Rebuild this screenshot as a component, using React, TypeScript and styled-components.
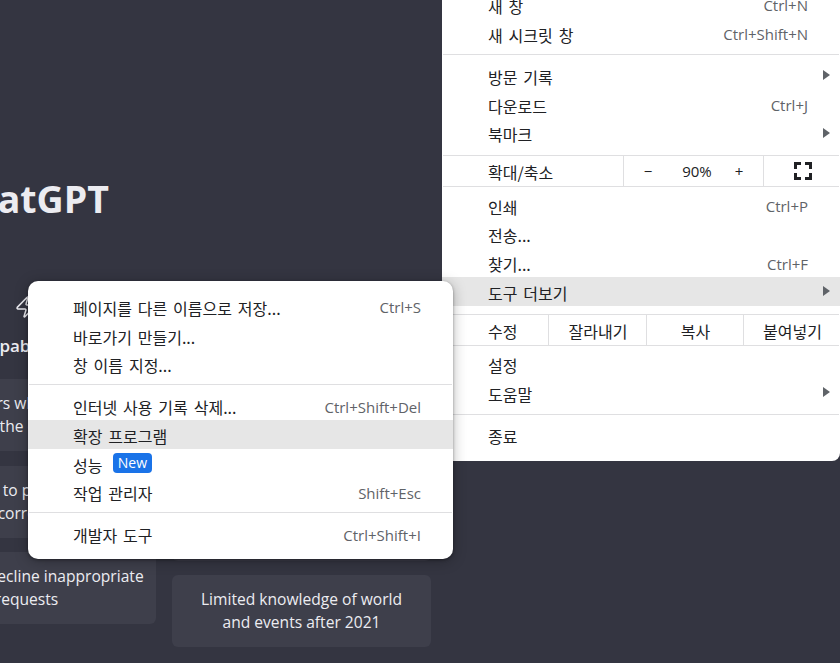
import React from "react";
import styled, { createGlobalStyle } from "styled-components";
import { Zap } from "lucide-react";

const Global = createGlobalStyle`
  html, body { margin: 0; padding: 0; background: #343541; }
`;

const Viewport = styled.div`
  position: relative;
  width: 840px;
  height: 663px;
  overflow: hidden;
  background: #343541;
  font-family: "Open Sans", "Noto Sans", sans-serif;
`;

const Page = styled.div`
  display: flex;
  flex-direction: column;
  margin-left: -103px;
  padding-top: 172px;
`;

const Title = styled.h1`
  width: 259px;
  margin: 0;
  padding-right: 47px;
  box-sizing: border-box;
  text-align: right;
  font-size: 37.5px;
  line-height: 54px;
  font-weight: 700;
  color: #ececf1;
`;

const Columns = styled.div`
  display: flex;
  gap: 16px;
  margin-top: 69px;
`;

const Column = styled.section`
  width: 259px;
  display: flex;
  flex-direction: column;
  align-items: center;
`;

const ColumnHead = styled.div`
  height: 84px;
  display: flex;
  flex-direction: column;
  align-items: center;
  color: #ececf1;
  svg { display: block; }
`;

const ColumnTitle = styled.h2`
  margin: 15px 0 0;
  font-size: 17px;
  line-height: 24px;
  font-weight: 600;
`;

const Cards = styled.div`
  width: 100%;
  display: flex;
  flex-direction: column;
  gap: 14.5px;
`;

const Card = styled.div`
  padding: 13px 0;
  border-radius: 6px;
  background: #3e3f4b;
  color: #ececf1;
  font-size: 15.6px;
  line-height: 23px;
  text-align: center;
`;

const CardLine = styled.span<{ $shift?: number }>`
  display: block;
  white-space: nowrap;
  margin-right: ${(p) => p.$shift ?? 0}px;
`;

const MenuPanel = styled.div`
  position: absolute;
  background: #fff;
  color: #202124;
  font-family: "Noto Sans CJK KR", "Noto Sans", sans-serif;
  font-size: 16px;
  word-spacing: 2.3px;
`;

const MainMenu = styled(MenuPanel)`
  left: 442px;
  right: 0;
  top: -10px;
  padding-bottom: 12px;
  border-radius: 0 0 8px 8px;
`;

const SubMenu = styled(MenuPanel)`
  left: 28px;
  top: 281px;
  width: 425px;
  padding: 11px 0 11px;
  border-radius: 10px;
  box-shadow: 0 1px 3px rgba(0, 0, 0, 0.35), 0 2px 14px rgba(0, 0, 0, 0.28);
`;

const Row = styled.div<{ $active?: boolean; $indent: number; $arrow?: boolean }>`
  height: 28.75px;
  display: flex;
  align-items: center;
  box-sizing: border-box;
  padding: 0 ${(p) => (p.$arrow ? 10 : 32)}px 0 ${(p) => p.$indent}px;
  background: ${(p) => (p.$active ? "#e6e6e6" : "transparent")};
  white-space: nowrap;
`;

const Label = styled.span`
  padding-top: 3px;
`;

const Shortcut = styled.span`
  padding-top: 2px;
  margin-left: auto;
  font-family: "Open Sans", "Noto Sans", sans-serif;
  font-size: 15px;
  color: #5f6368;
  word-spacing: 0;
`;

const Arrow = styled.span`
  margin-left: auto;
  width: 0;
  height: 0;
  border-left: 7px solid #5f6368;
  border-top: 5px solid transparent;
  border-bottom: 5px solid transparent;
`;

const Badge = styled.span`
  margin-left: 10.5px;
  width: 39px;
  height: 20px;
  border-radius: 4px;
  background: #1a73e8;
  color: #fff;
  font-family: "Open Sans", "Noto Sans", sans-serif;
  font-size: 14px;
  line-height: 20px;
  text-align: center;
`;

const Separator = styled.div<{ $before: number; $after: number; $inset: number }>`
  height: 1px;
  margin: ${(p) => p.$before}px ${(p) => p.$inset}px ${(p) => p.$after}px;
  background: #dfdfe1;
`;

const SplitRow = styled.div`
  height: 30px;
  display: flex;
  align-items: stretch;
`;

const SplitLabel = styled.div<{ $width: number }>`
  width: ${(p) => p.$width}px;
  flex: none;
  box-sizing: border-box;
  padding-left: 46px;
  display: flex;
  align-items: center;
`;

const SplitCell = styled.div<{ $width?: number }>`
  flex: ${(p) => (p.$width ? `0 0 ${p.$width}px` : "1 1 0")};
  box-sizing: border-box;
  border-left: 1px solid #dfdfe1;
  display: flex;
  align-items: center;
  justify-content: center;
  padding-left: 1px;
`;

const ZoomControls = styled(SplitCell)`
  display: grid;
  grid-template-columns: 48px 50px 34px;
  justify-items: center;
  justify-content: start;
  padding-left: 0;
  font-family: "Open Sans", "Noto Sans", sans-serif;
  font-size: 15px;
`;

const FullscreenIcon = () => (
  <svg width="18" height="18" viewBox="0 0 18 18" fill="none" stroke="#202124" strokeWidth="3">
    <path d="M1.5 7V1.5H7M11 1.5h5.5V7M16.5 11v5.5H11M7 16.5H1.5V11" />
  </svg>
);

export default function App() {
  return (
    <Viewport>
      <Global />
      <Page>
        <Title>ChatGPT</Title>
        <Columns>
          <Column>
            <ColumnHead>
              <Zap size={24} strokeWidth={1.5} />
              <ColumnTitle>Capabilities</ColumnTitle>
            </ColumnHead>
            <Cards>
              <Card>
                <CardLine $shift={-40}>Remembers what user said earlier</CardLine>
                <CardLine $shift={-68}>the conversation</CardLine>
              </Card>
              <Card>
                <CardLine $shift={-12}>Allows user to provide follow-up</CardLine>
                <CardLine $shift={-24}>corrections</CardLine>
              </Card>
              <Card>
                <CardLine>Trained to decline inappropriate</CardLine>
                <CardLine>requests</CardLine>
              </Card>
            </Cards>
          </Column>
          <Column>
            <ColumnHead>
              <Zap size={24} strokeWidth={1.5} />
              <ColumnTitle>Limitations</ColumnTitle>
            </ColumnHead>
            <Cards>
              <Card>
                <CardLine>May occasionally generate</CardLine>
                <CardLine>incorrect information</CardLine>
              </Card>
              <Card>
                <CardLine>May occasionally produce</CardLine>
                <CardLine>harmful instructions or</CardLine>
                <CardLine>biased content</CardLine>
              </Card>
              <Card>
                <CardLine>Limited knowledge of world</CardLine>
                <CardLine>and events after 2021</CardLine>
              </Card>
            </Cards>
          </Column>
        </Columns>
      </Page>

      <MainMenu>
        <Row $indent={46}><Label>새 창</Label><Shortcut>Ctrl+N</Shortcut></Row>
        <Row $indent={46}><Label>새 시크릿 창</Label><Shortcut>Ctrl+Shift+N</Shortcut></Row>
        <Separator $inset={1} $before={6.5} $after={6} />
        <Row $indent={46} $arrow><Label>방문 기록</Label><Arrow /></Row>
        <Row $indent={46}><Label>다운로드</Label><Shortcut>Ctrl+J</Shortcut></Row>
        <Row $indent={46} $arrow><Label>북마크</Label><Arrow /></Row>
        <Separator $inset={1} $before={7.5} $after={0} />
        <SplitRow>
          <SplitLabel $width={181}><Label>확대/축소</Label></SplitLabel>
          <ZoomControls $width={140}>
            <span>−</span>
            <span>90%</span>
            <span>+</span>
          </ZoomControls>
          <SplitCell><FullscreenIcon /></SplitCell>
        </SplitRow>
        <Separator $inset={1} $before={0} $after={4} />
        <Row $indent={46}><Label>인쇄</Label><Shortcut>Ctrl+P</Shortcut></Row>
        <Row $indent={46}><Label>전송...</Label></Row>
        <Row $indent={46}><Label>찾기...</Label><Shortcut>Ctrl+F</Shortcut></Row>
        <Row $indent={46} $arrow $active><Label>도구 더보기</Label><Arrow /></Row>
        <Separator $inset={1} $before={8} $after={0} />
        <SplitRow>
          <SplitLabel $width={106}><Label>수정</Label></SplitLabel>
          <SplitCell $width={98}><Label>잘라내기</Label></SplitCell>
          <SplitCell $width={97}><Label>복사</Label></SplitCell>
          <SplitCell><Label>붙여넣기</Label></SplitCell>
        </SplitRow>
        <Separator $inset={1} $before={0} $after={3.5} />
        <Row $indent={46}><Label>설정</Label></Row>
        <Row $indent={46} $arrow><Label>도움말</Label><Arrow /></Row>
        <Separator $inset={1} $before={7} $after={5.5} />
        <Row $indent={46}><Label>종료</Label></Row>
      </MainMenu>

      <SubMenu>
        <Row $indent={45}><Label>페이지를 다른 이름으로 저장...</Label><Shortcut>Ctrl+S</Shortcut></Row>
        <Row $indent={45}><Label>바로가기 만들기...</Label></Row>
        <Row $indent={45}><Label>창 이름 지정...</Label></Row>
        <Separator $inset={1} $before={6} $after={6} />
        <Row $indent={45}><Label>인터넷 사용 기록 삭제...</Label><Shortcut>Ctrl+Shift+Del</Shortcut></Row>
        <Row $indent={45} $active><Label>확장 프로그램</Label></Row>
        <Row $indent={45}><Label>성능</Label><Badge>New</Badge></Row>
        <Row $indent={45}><Label>작업 관리자</Label><Shortcut>Shift+Esc</Shortcut></Row>
        <Separator $inset={1} $before={6} $after={6} />
        <Row $indent={45}><Label>개발자 도구</Label><Shortcut>Ctrl+Shift+I</Shortcut></Row>
      </SubMenu>
    </Viewport>
  );
}
